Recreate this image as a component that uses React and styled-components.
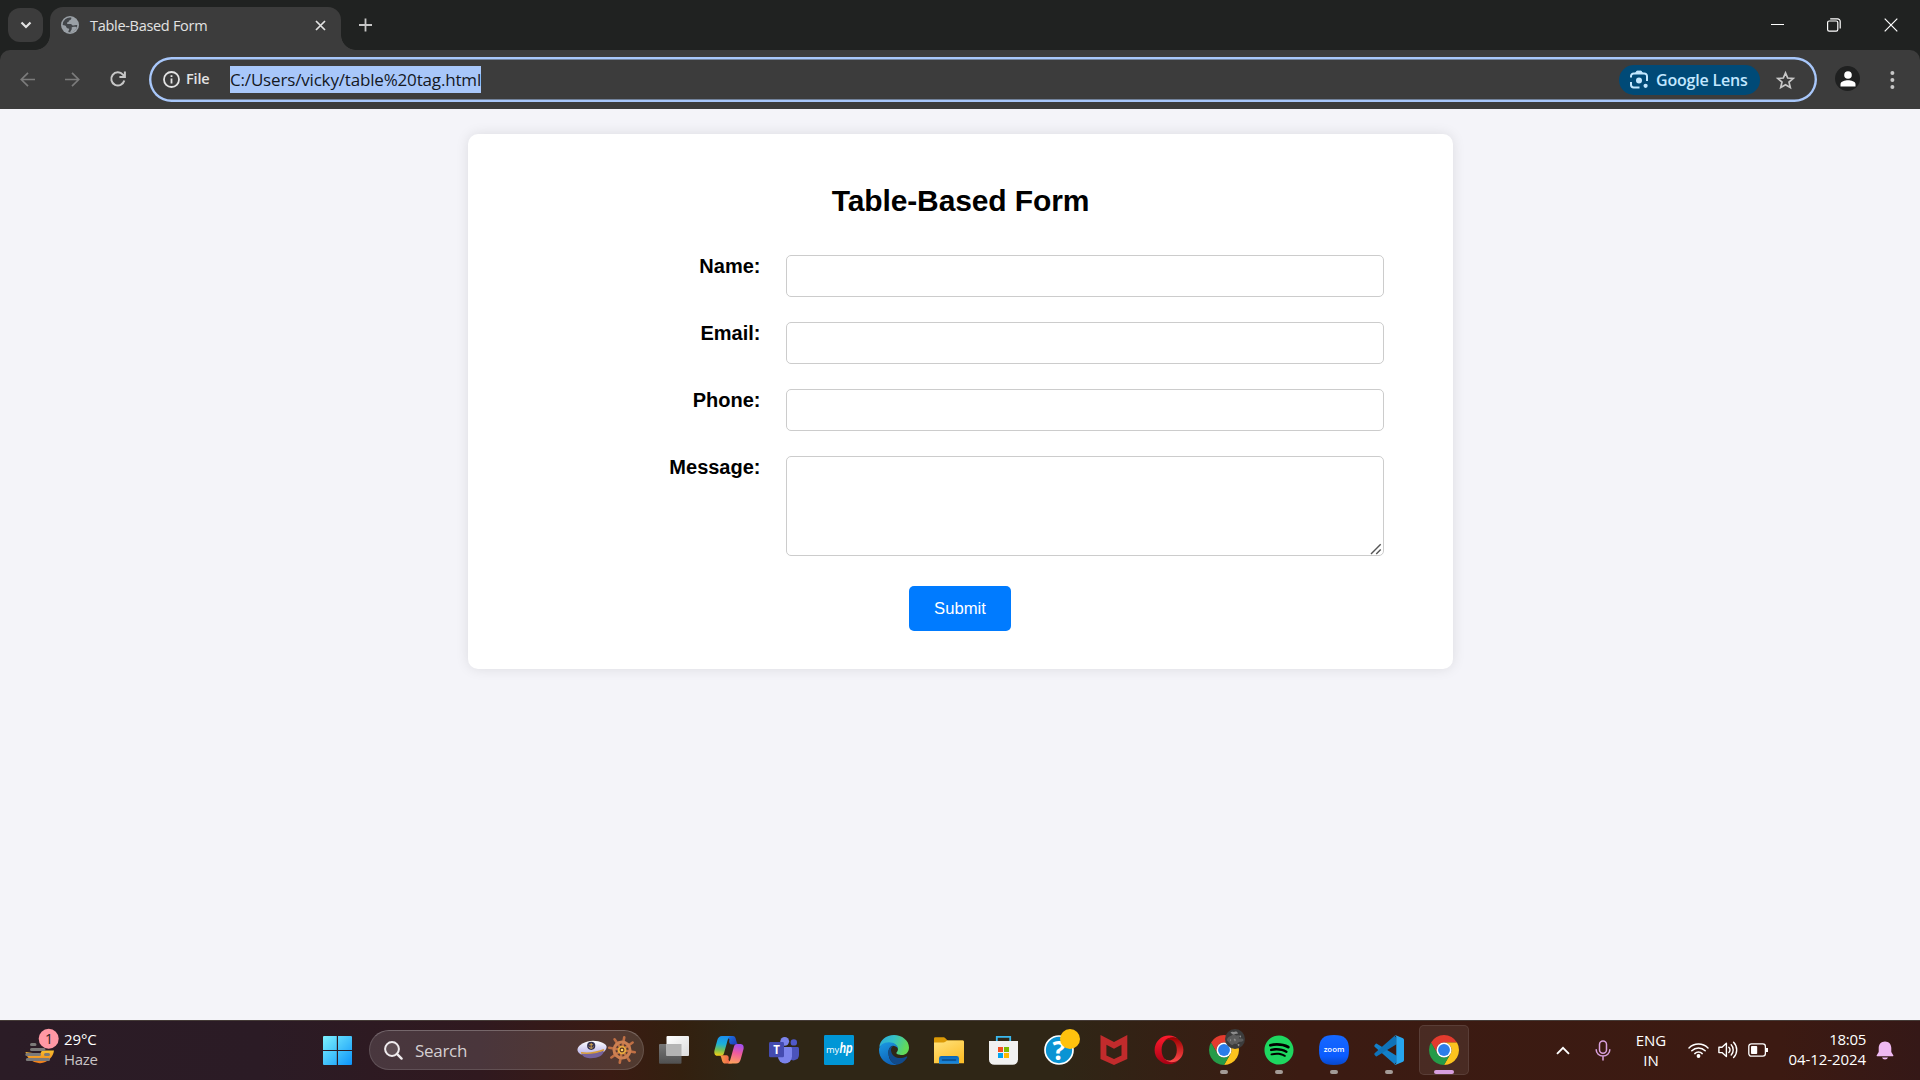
import React from "react";
import styled, { createGlobalStyle, css } from "styled-components";
import { FaSpotify } from "react-icons/fa";

const uiFont = `"Open Sans", "Noto Sans", sans-serif`;
const pageFont = `"Liberation Sans", Arial, sans-serif`;

const GlobalStyle = createGlobalStyle`
  * { box-sizing: border-box; }
  body { margin: 0; background: #202221; }
  svg { display: block; flex: none; overflow: visible; }
`;

const Screen = styled.div`
  display: grid;
  grid-template-rows: 50px 59px 911px 60px;
  width: 1920px;
  height: 1080px;
  overflow: hidden;
  font-family: ${uiFont};
`;

/* ---------- tab strip ---------- */
const TabStrip = styled.header`
  display: flex;
  align-items: flex-start;
  padding-left: 8px;
  background: #202221;
`;

const TabSearch = styled.button`
  display: grid;
  place-items: center;
  width: 35px;
  height: 34px;
  margin: 8px 7px 0 0;
  padding: 0;
  border: 0;
  border-radius: 12px;
  background: #3c3c3c;
`;

const Tab = styled.div`
  position: relative;
  display: flex;
  align-items: center;
  gap: 11px;
  width: 291px;
  height: 43px;
  margin-top: 7px;
  padding: 0 15px 7px 11px;
  border-radius: 13px 13px 0 0;
  background: #3c3c3c;

  &::before,
  &::after {
    content: "";
    position: absolute;
    bottom: 0;
    width: 15px;
    height: 15px;
  }
  &::before {
    right: 100%;
    background: radial-gradient(circle at 0 0, transparent 14.5px, #3c3c3c 15.2px);
  }
  &::after {
    left: 100%;
    background: radial-gradient(circle at 100% 0, transparent 14.5px, #3c3c3c 15.2px);
  }
`;

const TabTitle = styled.span`
  flex: 1;
  margin-top: 1px;
  color: #e3e3e3;
  font-size: 14.5px;
  line-height: 21px;
  letter-spacing: -0.3px;
`;

const NewTab = styled.button`
  display: grid;
  place-items: center;
  width: 34px;
  height: 34px;
  margin: 8px 0 0 7px;
  padding: 0;
  border: 0;
  background: none;
`;

const WindowControls = styled.div`
  display: flex;
  height: 49px;
  margin-left: auto;
  padding-right: 1px;
`;

const WindowButton = styled.button`
  display: grid;
  place-items: center;
  width: 57px;
  padding: 0;
  border: 0;
  background: none;
`;

/* ---------- toolbar ---------- */
const Toolbar = styled.div`
  display: flex;
  align-items: center;
  padding: 0 5px;
  border-radius: 10px 10px 0 0;
  background: #3c3c3c;
`;

const ToolButton = styled.button`
  display: grid;
  place-items: center;
  width: 45px;
  height: 45px;
  padding: 0;
  border: 0;
  background: none;
`;

const AddressBar = styled.div`
  display: flex;
  align-items: center;
  flex: 1;
  height: 45px;
  margin: 0 8px 0 9px;
  padding: 0 22px 0 14px;
  border-radius: 23px;
  box-shadow: inset 0 0 0 2.4px #a8c7fa;
`;

const SchemeChip = styled.span`
  display: flex;
  align-items: center;
  gap: 6px;
  width: 67px;
  color: #e3e3e3;
  font-size: 14.5px;
  font-weight: 600;
  line-height: 20px;
  letter-spacing: -0.15px;
`;

const SchemeText = styled.span`
  margin-bottom: 2px;
`;

const SelectedUrl = styled.span`
  height: 27px;
  background: #a8c7fa;
  color: #14181f;
  font-size: 17px;
  line-height: 28px;
  letter-spacing: -0.17px;
  white-space: nowrap;
`;

const LensPill = styled.button`
  display: flex;
  align-items: center;
  gap: 7px;
  width: 141px;
  height: 30px;
  margin: 0 16px 0 auto;
  padding: 0 0 0 11px;
  border: 0;
  border-radius: 15px;
  background: #004a77;
  color: #c2e7ff;
  font: 600 16px/30px ${uiFont};
  letter-spacing: -0.2px;
  white-space: nowrap;
`;

const Avatar = styled.span`
  display: grid;
  place-items: center;
  width: 25px;
  height: 25px;
  margin-bottom: 2px;
  border-radius: 50%;
  background: #1f2020;
`;

/* ---------- page ---------- */
const Page = styled.main`
  padding: 25px 467px 0 468px;
  background: #f4f4f9;
  font-family: ${pageFont};
`;

const Card = styled.form`
  height: 535px;
  padding: 50px 69px 38px 25px;
  border-radius: 10px;
  background: #fff;
  box-shadow: 0 0 12.5px rgba(0, 0, 0, 0.1);
`;

const Heading = styled.h2`
  margin: 0 -44px 37px 0;
  color: #000;
  font-size: 30px;
  line-height: 34px;
  letter-spacing: -0.12px;
  text-align: center;
`;

const Fields = styled.div`
  display: grid;
  grid-template-columns: 1fr 598px;
  gap: 25px;
`;

const Label = styled.label`
  padding-right: 0.5px;
  color: #000;
  font-size: 20px;
  font-weight: 700;
  line-height: 23px;
  text-align: right;
`;

const control = css`
  display: block;
  width: 100%;
  margin: 0;
  padding: 10px;
  border: 1px solid #ccc;
  border-radius: 5px;
  background: #fff;
  font: 16.67px ${pageFont};
  outline: none;
`;

const Input = styled.input`
  ${control}
  height: 42px;
`;

const MessageBox = styled.div`
  position: relative;
  height: 100px;
`;

const TextArea = styled.textarea`
  ${control}
  height: 100px;
  resize: none;
`;

const ResizeGrip = styled.svg`
  position: absolute;
  right: 2px;
  bottom: 1px;
`;

const Actions = styled.div`
  display: flex;
  justify-content: center;
  margin: 30px -43px 0 0;
`;

const Submit = styled.button`
  width: 102px;
  height: 45px;
  padding: 0;
  border: 0;
  border-radius: 5px;
  background: #007bff;
  color: #fff;
  font: 16.67px/45px ${pageFont};
`;

/* ---------- taskbar ---------- */
const Taskbar = styled.footer`
  display: flex;
  align-items: center;
  box-shadow: inset 0 1px #453b37;
  background: linear-gradient(
    90deg,
    #2b1c26 0,
    #2b1b25 260px,
    #30191f 480px,
    #3a1b13 610px,
    #33200f 680px,
    #2f2616 740px,
    #2f2616 1060px,
    #352014 1170px,
    #3b1b12 1300px,
    #3c1a12 1780px,
    #351817 1920px
  );
  color: #fff;
`;

const Weather = styled.div`
  display: flex;
  align-items: center;
  gap: 4px;
  width: 323px;
  padding: 0 0 2px 24px;
`;

const TextLines = styled.div`
  display: flex;
  flex-direction: column;
  align-items: ${(p) => p.$align || "flex-start"};
  width: ${(p) => p.$width || "auto"};
  margin-top: ${(p) => p.$drop || "-2px"};
`;

const Line = styled.span`
  color: ${(p) => (p.$dim ? "#c9c3c5" : "#fff")};
  font-size: 15px;
  line-height: 20px;
  letter-spacing: ${(p) => (p.$tight ? "-0.3px" : "-0.08px")};
  white-space: nowrap;
`;

const SearchBox = styled.div`
  display: flex;
  align-items: center;
  width: 275px;
  height: 40px;
  margin: 0 2px 0 17px;
  padding: 0 6px 0 14px;
  border: 1px solid rgba(255, 255, 255, 0.13);
  border-top-color: rgba(255, 255, 255, 0.24);
  border-radius: 20px;
  background: rgba(255, 255, 255, 0.13);
`;

const SearchText = styled.span`
  flex: 1;
  margin: 1px 0 0 12px;
  color: #d5cfd1;
  font-size: 17px;
  line-height: 25px;
  letter-spacing: -0.3px;
`;

const Apps = styled.nav`
  display: flex;
`;

const AppSlot = styled.div`
  position: relative;
  display: grid;
  place-items: center;
  width: 55px;
  height: 60px;
`;

const AppFace = styled.div`
  display: grid;
  place-items: center;
  width: 50px;
  height: 50px;
  border: 1px solid ${(p) => (p.$active ? "rgba(255,255,255,0.09)" : "transparent")};
  border-radius: 5px;
  background: ${(p) => (p.$active ? "rgba(255,255,255,0.075)" : "none")};
`;

const Running = styled.i`
  position: absolute;
  bottom: 6px;
  left: 50%;
  width: ${(p) => (p.$active ? "20px" : "8px")};
  height: 4px;
  border-radius: 2px;
  background: ${(p) => (p.$active ? "#d79fe0" : "#a39b97")};
  transform: translateX(-50%);
`;

const Tray = styled.div`
  display: flex;
  align-items: center;
  margin-left: auto;
  padding-right: 16px;
`;

const TrayCell = styled.span`
  display: grid;
  place-items: center;
  width: ${(p) => p.$w}px;
  height: 40px;
`;

const Status = styled.span`
  display: flex;
  margin-left: 4px;
`;

/* ---------- icons ---------- */
const Stroke = ({ w, h, d, c = "#e3e3e3", s = 2, children }) => (
  <svg width={w} height={h} viewBox={`0 0 ${w} ${h}`} fill="none" stroke={c} strokeWidth={s}>
    {d && <path d={d} />}
    {children}
  </svg>
);

const Globe = () => (
  <svg width="18" height="18" viewBox="0 0 18 18">
    <circle cx="9" cy="9" r="9" fill="#9aa0a6" />
    <path
      d="M10.2 1.6C10.8 2.8 9.8 4.3 8.3 4.4C7.6 4.6 8 6 6.8 6.3C5.5 6.5 5.8 7.8 6.6 7.9H9.6C10.8 7.9 11 9.6 12.4 9.6C13.6 9.6 14.6 8.6 16.3 9.3A7.3 7.3 0 0 1 7.4 16.1C7 14.6 8.4 14.2 8.2 12.7C6.8 12.5 5.6 12.4 5.3 11C5 9.4 3.4 9.4 1.7 9A7.3 7.3 0 0 1 10.2 1.6Z"
      fill="#43464a"
    />
    <path d="M10.6 11.4C11.6 10.4 13.6 10.8 15.8 10.9A7 7 0 0 1 9.3 16.2C9.3 14.4 11.3 14 10.6 11.4Z" fill="#9aa0a6" />
  </svg>
);

const LensIcon = () => (
  <svg width="19" height="19" viewBox="0 0 19 19" fill="none" stroke="#c2e7ff" strokeWidth="2">
    <path d="M1 7.6V6.2A2.7 2.7 0 0 1 3.7 3.5H14.3A2.7 2.7 0 0 1 17 6.2V11M1 12V14.8A2.7 2.7 0 0 0 3.7 17.5H9.5" />
    <path d="M5.4 3.2L6.8 1H11.2L12.6 3.2Z" fill="#c2e7ff" strokeWidth="0.8" />
    <circle cx="9" cy="10.4" r="3" fill="#c2e7ff" stroke="none" />
    <circle cx="15.6" cy="15.8" r="2.1" fill="#c2e7ff" stroke="none" />
  </svg>
);

const HazeIcon = () => (
  <svg width="36" height="38" viewBox="0 0 36 38">
    <defs>
      <linearGradient id="sun" x2="0" y2="1">
        <stop stopColor="#f9c02f" />
        <stop offset="1" stopColor="#ee7a1a" />
      </linearGradient>
    </defs>
    <path d="M1.5 22A14.5 14.5 0 0 0 30 20.5H18L16 24Z" fill="url(#sun)" />
    <g stroke="#7c7a79" strokeWidth="3" strokeLinecap="round">
      <path d="M7.5 14.5H11M7.5 19.5H20M2.8 24.5H15.5M21.5 24.5H24.5M3.3 29.4H24.5" />
    </g>
    <circle cx="24.7" cy="8.8" r="10" fill="#ff98a4" />
    <text x="25" y="14" textAnchor="middle" fontFamily="Open Sans" fontSize="14" fill="#2b1c20">1</text>
  </svg>
);

const WindowsLogo = () => (
  <svg width="29" height="29" viewBox="0 0 29 29">
    <defs>
      <linearGradient id="win" x2="1" y2="1">
        <stop stopColor="#7df1ff" />
        <stop offset="0.5" stopColor="#45c4fb" />
        <stop offset="1" stopColor="#0c93fb" />
      </linearGradient>
    </defs>
    <path fill="url(#win)" d="M1 0H13.8V13.9H0V1A1 1 0 0 1 1 0ZM15 0H28A1 1 0 0 1 29 1V13.9H15ZM0 15.1H13.8V29H1A1 1 0 0 1 0 28ZM15 15.1H29V28A1 1 0 0 1 28 29H15Z" />
  </svg>
);

const CaptainHat = () => (
  <svg width="30" height="20" viewBox="0 0 30 20">
    <defs>
      <linearGradient id="hat" x2="0" y2="1">
        <stop stopColor="#fff" />
        <stop offset="1" stopColor="#b9b2ea" />
      </linearGradient>
    </defs>
    <path d="M.5 9C1.5 4.5 9 .8 16 .8C23 .8 30 4 29.6 7.2C29.3 9.5 27.6 11.5 26.4 12.3L4 14.5C2 13.5 0 11.5 .5 9Z" fill="url(#hat)" />
    <path d="M4.5 13.5C11 14.5 20 13 26.5 10.5C27.5 15.5 20 18.6 12.5 18.2C8.5 18 5.5 16.5 4.5 13.5Z" fill="#75629c" />
    <path d="M4 12.8C11.5 14 20 12.4 27 9.7" fill="none" stroke="#d89d36" strokeWidth="1.6" />
    <circle cx="14.2" cy="5.8" r="4.1" fill="#353350" />
    <path d="M14.2 3V8.6M12.3 4.7H16.1M11.7 6.7Q14.2 9.8 16.7 6.7" fill="none" stroke="#dba64d" strokeWidth="0.9" />
  </svg>
);

const ShipWheel = () => (
  <svg width="30" height="30" viewBox="-15 -15 30 30" fill="none">
    {[10, 55, 100, 145, 190, 235, 280, 325].map((a) => (
      <path key={a} d="M0 -4V-13" stroke="#bf6f44" strokeWidth="2.6" strokeLinecap="round" transform={`rotate(${a})`} />
    ))}
    <circle r="8" stroke="#cc8052" strokeWidth="3" />
    <circle r="3.4" fill="#593322" stroke="#e5a93f" strokeWidth="1.9" />
    <circle r="1.3" fill="#ffd36c" />
  </svg>
);

const TaskView = () => (
  <svg width="30" height="28" viewBox="0 0 30 28">
    <defs>
      <linearGradient id="tv1" x2="1" y2="1">
        <stop stopColor="#fff" />
        <stop offset="1" stopColor="#dcdcdc" />
      </linearGradient>
      <linearGradient id="tv2" x2="0" y2="1">
        <stop stopColor="#777" />
        <stop offset="1" stopColor="#505050" />
      </linearGradient>
    </defs>
    <rect y="8" width="22.5" height="19.7" rx="1" fill="url(#tv2)" />
    <rect x="7.5" y="0" width="22.5" height="20" rx="1" fill="url(#tv1)" />
    <rect x="7.5" y="8" width="15" height="12" fill="#b4b4b4" />
  </svg>
);

const Copilot = () => (
  <svg width="30" height="28" viewBox="0 0 30 28">
    <defs>
      <linearGradient id="cpA" x1="0.4" x2="0.3" y2="1">
        <stop stopColor="#1a8fee" />
        <stop offset="0.4" stopColor="#1cb0d8" />
        <stop offset="0.7" stopColor="#72c057" />
        <stop offset="1" stopColor="#f5cf13" />
      </linearGradient>
      <linearGradient id="cpB" x1="0.6" x2="0.4" y2="1">
        <stop stopColor="#a24ff0" />
        <stop offset="0.45" stopColor="#ef5b9e" />
        <stop offset="1" stopColor="#ffa25c" />
      </linearGradient>
      <linearGradient id="cpC" x2="1" y2="0.6">
        <stop stopColor="#1b7be8" />
        <stop offset="1" stopColor="#1f3fbb" />
      </linearGradient>
      <linearGradient id="cpD" x2="1">
        <stop stopColor="#f7a343" />
        <stop offset="1" stopColor="#f0564f" />
      </linearGradient>
    </defs>
    <path d="M12 0H19C21.5 0 22 3.5 22.6 5.8C23 7.5 23.6 8.4 25 8.4H18C16 8.4 14.5 7 15.5 3.5Z" fill="url(#cpC)" />
    <path d="M8 0H17C14.6 0 14 3 13 6.5L10.2 16.5C9.6 18.6 8.8 19.8 7 19.8H3.2C.8 19.8 0 17.5 .4 14.8L3.2 4.6C4 1.6 5.5 0 8 0Z" fill="url(#cpA)" />
    <path d="M18 27.6H11C8.5 27.6 8 24.5 7.4 22.3C7 20.5 6.4 19.3 5 19.3H12C14 19.3 15.3 20.5 14.5 24Z" fill="url(#cpD)" />
    <path d="M22 27.6H13C15.4 27.6 16 24.6 17 21.2L19.8 11.2C20.4 9 21.2 8 23 8H26.8C29.2 8 30 10.2 29.6 12.8L26.8 23C26 26 24.5 27.6 22 27.6Z" fill="url(#cpB)" />
  </svg>
);

const Teams = () => (
  <svg width="30" height="30" viewBox="0 0 30 30">
    <circle cx="24.8" cy="7.4" r="3.2" fill="#5059c9" />
    <path d="M20 12H28.4C29.4 12 30 12.6 30 13.6V20A5.5 5.5 0 0 1 20 23Z" fill="#4b53bc" />
    <circle cx="15.7" cy="6.3" r="4.4" fill="#7b83eb" />
    <path d="M9 12H21.4C22.4 12 23 12.6 23 13.6V21.5A7 7 0 0 1 9 21.5Z" fill="#7b83eb" />
    <rect x="0" y="7" width="15" height="15.3" rx="1.4" fill="#444bb0" />
    <text x="7.5" y="19" textAnchor="middle" fontFamily="Open Sans" fontWeight="700" fontSize="11.5" fill="#fff">T</text>
  </svg>
);

const MyHp = () => (
  <svg width="30" height="30" viewBox="0 0 30 30">
    <rect width="30" height="30" rx="1.2" fill="#0096d6" />
    <text x="2" y="18" fontFamily="Open Sans" fontSize="9.3" fill="#fff">my</text>
    <text transform="translate(15.4 18.4) scale(.74 1)" fontFamily="Liberation Sans" fontStyle="italic" fontWeight="700" fontSize="14.5" fill="#fff">hp</text>
  </svg>
);

const Edge = () => (
  <svg width="30" height="30" viewBox="0 0 30 30">
    <defs>
      <linearGradient id="edT" x1="0" x2="1" y2="0.3">
        <stop stopColor="#2aa9dd" />
        <stop offset="0.5" stopColor="#35c1c6" />
        <stop offset="1" stopColor="#63da58" />
      </linearGradient>
      <linearGradient id="edB" x2="0.4" y2="1">
        <stop stopColor="#1b9ae4" />
        <stop offset="1" stopColor="#0f63b8" />
      </linearGradient>
    </defs>
    <path d="M.3 12C1 5 7 0 15 0C23 0 30 5.5 30 12.5C30 17.5 26.5 20 23 20C20 20 17.3 19 17.3 18C17.3 17.2 19 16.5 19 14C19 11 15.5 8.2 11 8.2C5 8.2 1.5 11 .3 12Z" fill="url(#edT)" />
    <path d="M0 15C0 10 4.5 7.2 10 7.2C15 7.2 19 10 19 14C18 11.4 15.5 10.8 14 10.8C11 11 9.2 14.5 9.5 18.5C9.7 24 13 28.5 18 29.7C8 31.5 0 24 0 15Z" fill="url(#edB)" />
    <path d="M9.5 18C9 14 11.5 11 14.2 10.8C12 12.5 11.5 15 12.5 17.5C14 22.3 20.5 25 27.3 21.5C28.3 21.1 28.6 21.8 28 22.7C25.5 27 21.5 29.3 17.8 29.7C13 28.5 9.8 24 9.5 18Z" fill="#114a8b" />
  </svg>
);

const Folder = () => (
  <svg width="30" height="27" viewBox="0 0 30 27">
    <defs>
      <linearGradient id="fld" x2="0.6" y2="1">
        <stop stopColor="#ffe27c" />
        <stop offset="1" stopColor="#fdbf2c" />
      </linearGradient>
      <linearGradient id="fldB" x2="0" y2="1">
        <stop stopColor="#0a66b8" />
        <stop offset="1" stopColor="#1c8be0" />
      </linearGradient>
    </defs>
    <path d="M0 1.6A1.3 1.3 0 0 1 1.3 .3H9.4C10.5 .3 11 .9 11.6 1.6L13.6 3.5H28.6A1.4 1.4 0 0 1 30 5V10H0Z" fill="#dc9a06" />
    <path d="M0 5.6H9.5C10.8 5.6 12 4.4 13 3.6H28.6A1.4 1.4 0 0 1 30 5V26.3H0Z" fill="url(#fld)" />
    <path d="M5 26.8V21.5A2.4 2.4 0 0 1 7.4 19.1H22.6A2.4 2.4 0 0 1 25 21.5V26.8Z" fill="url(#fldB)" />
    <path d="M8.4 23H21.6" stroke="#094a87" strokeWidth="1.4" strokeLinecap="round" />
  </svg>
);

const Store = () => (
  <svg width="29" height="29" viewBox="0 0 29 29">
    <path d="M7.8 6V.9H21.2V6" fill="none" stroke="#3bb9ee" strokeWidth="1.8" />
    <path d="M0 5H29V23.5A5.3 5.3 0 0 1 23.7 28.8H5.3A5.3 5.3 0 0 1 0 23.5Z" fill="#f1f1f1" />
    <path d="M9 11H14V16H9Z" fill="#f25022" />
    <path d="M15 11H20V16H15Z" fill="#7fba00" />
    <path d="M9 17H14V22H9Z" fill="#00a4ef" />
    <path d="M15 17H20V22H15Z" fill="#ffb900" />
  </svg>
);

const Help = () => (
  <svg width="42" height="42" viewBox="-21 -21 42 42">
    <circle r="14" fill="#0a94d4" stroke="#fff" strokeWidth="1.7" />
    <text y="9.7" textAnchor="middle" fontFamily="Open Sans" fontWeight="700" fontSize="27" fill="#fff">?</text>
    <circle cx="11" cy="-11" r="10" fill="#ffc20e" />
  </svg>
);

const McAfee = () => (
  <svg width="28" height="30" viewBox="0 0 28 30">
    <path fillRule="evenodd" fill="#c12b2c" d="M.5 0L14 7L27.3 0V24L14 30L.5 24ZM6.4 9.8V20.4L14 24L21.5 20.4V9.8L14 13.8Z" />
  </svg>
);

const Opera = () => (
  <svg width="30" height="30" viewBox="0 0 30 30">
    <defs>
      <linearGradient id="opA" x2="0" y2="1">
        <stop stopColor="#ff1b2d" />
        <stop offset="1" stopColor="#a70014" />
      </linearGradient>
      <linearGradient id="opB" x2="0" y2="1">
        <stop stopColor="#9c0000" />
        <stop offset="1" stopColor="#ff4b4b" />
      </linearGradient>
    </defs>
    <path fillRule="evenodd" fill="url(#opA)" d="M15 .5A14.3 14.3 0 1 0 15 29.3A14.3 14.3 0 0 0 24.5 25.5C18 29.8 7.6 26.2 7.6 15C7.6 3.8 18 0 24.5 4.3A14.3 14.3 0 0 0 15 .5Z" />
    <path fill="url(#opB)" d="M10 6.2C16.5 -1.2 29.4 3.3 29.4 14.9C29.4 26.5 16.5 31 10 23.6C15.5 28 22.8 24.4 22.8 14.9C22.8 5.4 15.5 1.9 10 6.2Z" />
  </svg>
);

const ChromeShapes = () => (
  <g>
    <path d="M24 12H44.78A24 24 0 0 0 3.22 12L13.61 30A12 12 0 0 1 24 12Z" fill="#e33b2e" />
    <path d="M44.78 12A24 24 0 0 1 24 48L34.39 30A12 12 0 0 0 24 12Z" fill="#fcc31e" />
    <path d="M24 48A24 24 0 0 1 3.22 12L13.61 30A12 12 0 0 0 34.39 30Z" fill="#259b48" />
    <circle cx="24" cy="24" r="12" fill="#fff" />
    <circle cx="24" cy="24" r="9.5" fill="#2b7de9" />
  </g>
);

const Chrome = () => (
  <svg width="30" height="30" viewBox="0 0 48 48">
    <ChromeShapes />
  </svg>
);

const ChromeProfile = () => (
  <svg width="42" height="42" viewBox="0 0 67.2 67.2">
    <g transform="translate(9.6 9.6)">
      <ChromeShapes />
    </g>
    <circle cx="51.2" cy="16" r="16" fill="#3c3c3c" />
    <path d="M38 18C40 10 45 12 47 9C50 6 52 12 55 10C58 9 60 12 57 15C61 16 64 14 65 18C62 22 58 19 56 22C54 26 50 22 48 25C45 27 42 22 38 18Z" fill="#5c5c5c" />
    <path d="M44 6C46 3 49 6 52 4C54 3 57 6 55 8C52 7 50 10 47 8ZM49 16C52 14 54 18 51 20ZM58 11C61 9 62 12 60 14ZM43 17C45 15 46 18 44 20ZM55 25C58 23 60 25 57 28Z" fill="#8d8d8d" />
  </svg>
);

const Spotify = styled.span`
  width: 30px;
  height: 30px;
  background: radial-gradient(circle, #000 13px, transparent 13.5px);
  color: #1ed760;

  svg {
    width: 30px;
    height: 30px;
  }
`;

const Zoom = () => (
  <svg width="30" height="30" viewBox="0 0 30 30">
    <defs>
      <linearGradient id="zm" x2="0" y2="1">
        <stop stopColor="#1668ff" />
        <stop offset="0.7" stopColor="#0b5cff" />
        <stop offset="1" stopColor="#0848c9" />
      </linearGradient>
    </defs>
    <path d="M15 0C26 0 30 4 30 15S26 30 15 30S0 26 0 15S4 0 15 0Z" fill="url(#zm)" />
    <text x="15" y="17" textAnchor="middle" fontFamily="Open Sans" fontWeight="600" fontSize="7.8" fill="#fff">zoom</text>
  </svg>
);

const VsCode = () => (
  <svg width="30" height="30" viewBox="0 0 30 30">
    <path d="M1.8 8.8L.5 10.2Q0 11 .6 11.7L20.6 29.3L22.5 27V20.8L3.3 8.9Q2.5 8.3 1.8 8.8Z" fill="#1380c9" />
    <path d="M1.8 21.2L.5 19.8Q0 19 .6 18.3L20.6 .7L22.5 3V9.2L3.3 21.1Q2.5 21.7 1.8 21.2Z" fill="#0f73b9" />
    <path d="M21.8 .2L29 3.3Q30 3.8 30 5V25Q30 26.2 29 26.7L21.8 29.8Q20.8 30.1 20 29.2Q22.3 30 22.3 27.8V2.2Q22.3 0 20 .8Q20.8 -.1 21.8 .2Z" fill="#27a5ee" />
  </svg>
);

const Volume = () => (
  <Stroke w={21} h={18} c="#fff" s={1.4}>
    <path d="M.9 6.2H4L8.4 2.2V15.6L4 11.6H.9Z" strokeLinejoin="round" />
    <path d="M10.8 6.2A4 4 0 0 1 10.8 11.6M13.2 3.8A7.5 7.5 0 0 1 13.2 14M15.6 1.3A11 11 0 0 1 15.6 16.6" strokeLinecap="round" />
  </Stroke>
);

const Wifi = () => (
  <Stroke w={21} h={17} c="#fff" s={1.5}>
    <path d="M1 6A13.4 13.4 0 0 1 20 6M3.8 8.8A9.5 9.5 0 0 1 17.2 8.8M6.8 11.6A5.3 5.3 0 0 1 14.2 11.6" strokeLinecap="round" />
    <circle cx="10.5" cy="14" r="1.9" fill="#fff" stroke="none" />
  </Stroke>
);

const Battery = () => (
  <Stroke w={21} h={14} c="#fff" s={1.3}>
    <rect x="0.8" y="0.8" width="16.6" height="12.4" rx="2.6" />
    <path d="M19 5V9" strokeWidth="2" />
    <rect x="3" y="3" width="6.2" height="8" rx="0.8" fill="#fff" stroke="none" />
  </Stroke>
);

const Mic = () => (
  <Stroke w={16} h={21} c="#d9a0dd" s={1.5}>
    <rect x="4.5" y="0.9" width="7" height="12.4" rx="3.5" />
    <path d="M1.2 9.8A6.8 6.3 0 0 0 14.8 9.8M8 16.3V20" strokeLinecap="round" />
  </Stroke>
);

const Bell = () => (
  <svg width="18" height="19" viewBox="0 0 18 19">
    <path d="M9 .4C12.8 .4 15.3 3.2 15.3 6.9V11L17.4 14.4Q17.6 15.2 16.8 15.2H1.2Q.4 15.2 .6 14.4L2.7 11V6.9C2.7 3.2 5.2 .4 9 .4ZM6 16.6H12A3.1 2.7 0 0 1 6 16.6Z" fill="#efb9f2" />
  </svg>
);

const apps = [
  { id: "taskview", icon: <TaskView /> },
  { id: "copilot", icon: <Copilot /> },
  { id: "teams", icon: <Teams /> },
  { id: "myhp", icon: <MyHp /> },
  { id: "edge", icon: <Edge /> },
  { id: "files", icon: <Folder /> },
  { id: "store", icon: <Store /> },
  { id: "help", icon: <Help /> },
  { id: "mcafee", icon: <McAfee /> },
  { id: "opera", icon: <Opera /> },
  { id: "chrome-profile", icon: <ChromeProfile />, running: true },
  { id: "spotify", icon: <Spotify><FaSpotify /></Spotify>, running: true },
  { id: "zoom", icon: <Zoom />, running: true },
  { id: "vscode", icon: <VsCode />, running: true },
  { id: "chrome", icon: <Chrome />, running: true, active: true },
];

export default function App() {
  return (
    <>
      <GlobalStyle />
      <Screen>
        <TabStrip>
          <TabSearch>
            <Stroke w={12} h={8} d="M1.5 1.5L6 6L10.5 1.5" s={2.2} />
          </TabSearch>
          <Tab>
            <Globe />
            <TabTitle>Table-Based Form</TabTitle>
            <Stroke w={11} h={11} d="M1 1L10 10M10 1L1 10" s={1.7} />
          </Tab>
          <NewTab>
            <Stroke w={14} h={14} d="M7.5 .5V13.5M1 7H14" s={1.8} c="#c7c7c7" />
          </NewTab>
          <WindowControls>
            <WindowButton>
              <Stroke w={13} h={1} d="M1 .5H14" s={1} c="#fff" />
            </WindowButton>
            <WindowButton>
              <Stroke w={14} h={14} s={1.2} c="#fff">
                <rect x="0.6" y="3" width="10.2" height="10.2" rx="1.6" />
                <path d="M3.2 .8H10.6A2.6 2.6 0 0 1 13.2 3.4V10.6" />
              </Stroke>
            </WindowButton>
            <WindowButton>
              <Stroke w={14} h={14} d="M.7 .7L13.3 13.3M13.3 .7L.7 13.3" s={1.2} c="#fff" />
            </WindowButton>
          </WindowControls>
        </TabStrip>

        <Toolbar>
          <ToolButton>
            <Stroke w={15} h={15} d="M15 7.5H1.5M8 .8L1.3 7.5L8 14.2" s={1.7} c="#7b7b7b" />
          </ToolButton>
          <ToolButton>
            <Stroke w={15} h={15} d="M0 7.5H13.5M7 .8L13.7 7.5L7 14.2" s={1.7} c="#7b7b7b" />
          </ToolButton>
          <ToolButton>
            <Stroke w={16} h={17} d="M14.3 9.6A6.6 6.6 0 1 1 12.9 3.6L14.6 5.6M14.9 .6V6H9.4" s={2} c="#c7c7c7" />
          </ToolButton>
          <AddressBar>
            <SchemeChip>
              <Stroke w={17} h={17} s={1.8}>
                <circle cx="8.5" cy="8.5" r="7.5" />
                <path d="M8.5 7.5V12.6M8.5 4.2V6" />
              </Stroke>
              <SchemeText>File</SchemeText>
            </SchemeChip>
            <SelectedUrl>C:/Users/vicky/table%20tag.html</SelectedUrl>
            <LensPill>
              <LensIcon />
              Google Lens
            </LensPill>
            <Stroke
              w={19}
              h={18}
              s={1.7}
              c="#c7c7c7"
              d="M9.5 1.9L11.7 7L17.2 7.5L13 11.1L14.3 16.5L9.5 13.7L4.7 16.5L6 11.1L1.8 7.5L7.3 7Z"
            />
          </AddressBar>
          <ToolButton>
            <Avatar>
              <svg width="16" height="16" viewBox="0 0 16 16" fill="#fff">
                <circle cx="8" cy="4" r="3.8" />
                <path d="M.5 15.5V13C.5 10.4 5 9.2 8 9.2S15.5 10.4 15.5 13V15.5Z" />
              </svg>
            </Avatar>
          </ToolButton>
          <ToolButton>
            <svg width="5" height="18" viewBox="0 0 5 18" fill="#c7c7c7">
              <circle cx="2.4" cy="2" r="2" />
              <circle cx="2.4" cy="9" r="2" />
              <circle cx="2.4" cy="16" r="2" />
            </svg>
          </ToolButton>
        </Toolbar>

        <Page>
          <Card>
            <Heading>Table-Based Form</Heading>
            <Fields>
              <Label htmlFor="name">Name:</Label>
              <Input id="name" />
              <Label htmlFor="email">Email:</Label>
              <Input id="email" />
              <Label htmlFor="phone">Phone:</Label>
              <Input id="phone" />
              <Label htmlFor="message">Message:</Label>
              <MessageBox>
                <TextArea id="message" />
                <ResizeGrip width="12" height="12" viewBox="0 0 12 12" fill="none" stroke="#555" strokeWidth="1.4">
                  <path d="M1 11L10.7 1.3M6.2 11L10.7 6.5" />
                </ResizeGrip>
              </MessageBox>
            </Fields>
            <Actions>
              <Submit type="button">Submit</Submit>
            </Actions>
          </Card>
        </Page>

        <Taskbar>
          <Weather>
            <HazeIcon />
            <TextLines $width="60px" $drop="-1px">
              <Line>29°C</Line>
              <Line $dim $tight>Haze</Line>
            </TextLines>
          </Weather>
          <WindowsLogo />
          <SearchBox>
            <Stroke w={19} h={19} s={2} c="#f0ecee">
              <circle cx="8" cy="8" r="6.9" fill="rgba(255,255,255,0.12)" />
              <path d="M12.9 12.9L17.6 17.6" strokeWidth="2.4" strokeLinecap="round" />
            </Stroke>
            <SearchText>Search</SearchText>
            <CaptainHat />
            <ShipWheel />
          </SearchBox>
          <Apps>
            {apps.map((app) => (
              <AppSlot key={app.id}>
                <AppFace $active={app.active}>{app.icon}</AppFace>
                {app.running && <Running $active={app.active} />}
              </AppSlot>
            ))}
          </Apps>
          <Tray>
            <TrayCell $w={40}>
              <Stroke w={14} h={9} d="M1 7.8L7 1.8L13 7.8" s={1.9} c="#fff" />
            </TrayCell>
            <TrayCell $w={40}>
              <Mic />
            </TrayCell>
            <TextLines $align="center" $width="56px" $drop="-1px">
              <Line>ENG</Line>
              <Line>IN</Line>
            </TextLines>
            <Status>
              <TrayCell $w={30}><Wifi /></TrayCell>
              <TrayCell $w={30}><Volume /></TrayCell>
              <TrayCell $w={30}><Battery /></TrayCell>
            </Status>
            <TextLines $align="flex-end" $width="93px" $drop="-3px">
              <Line $tight>18:05</Line>
              <Line>04-12-2024</Line>
            </TextLines>
            <TrayCell $w={38}><Bell /></TrayCell>
          </Tray>
        </Taskbar>
      </Screen>
    </>
  );
}
